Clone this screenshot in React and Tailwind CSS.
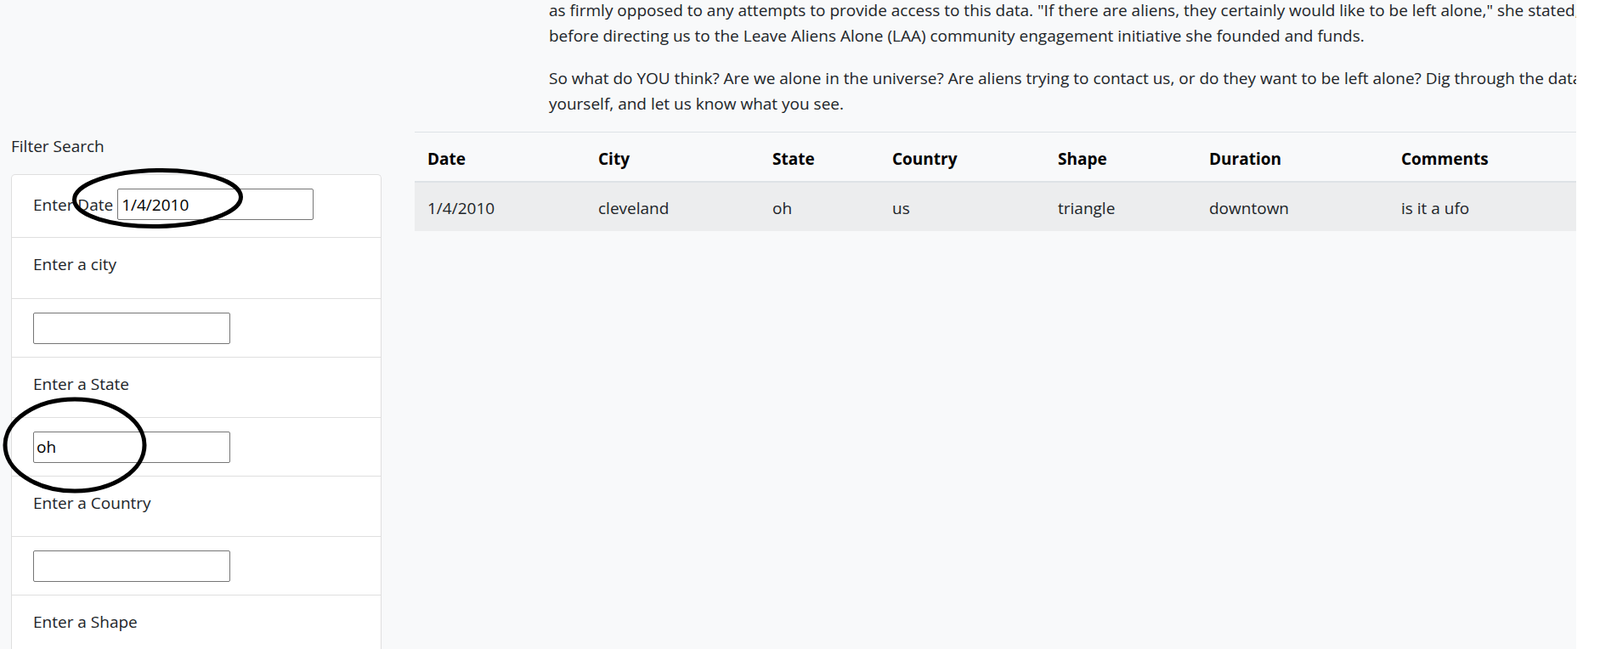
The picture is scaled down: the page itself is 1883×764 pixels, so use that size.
import React from "react";

const cols = [
  { name: "Date", w: "w-[201px]", v: "1/4/2010" },
  { name: "City", w: "w-[205px]", v: "cleveland" },
  { name: "State", w: "w-[141px]", v: "oh" },
  { name: "Country", w: "w-[195px]", v: "us" },
  { name: "Shape", w: "w-[178px]", v: "triangle" },
  { name: "Duration", w: "w-[226px]", v: "downtown" },
  { name: "Comments", w: "w-[240px]", v: "is it a ufo" },
];

function LabelRow({ text, h }) {
  return (
    <li className={`${h} border-b border-[#dfdfdf] pl-[25px] pt-[16px] leading-[30px]`}>
      {text}
    </li>
  );
}

function InputRow({ value }) {
  return (
    <li className="h-[69px] border-b border-[#dfdfdf] pl-[25px] flex items-center">
      <input
        type="text"
        defaultValue={value}
        className="w-[232px] h-[37px] border border-[#767676] rounded-[2px] bg-white px-[3px] text-[19px] text-black outline-none"
        style={{ fontFamily: "inherit" }}
      />
    </li>
  );
}

export default function App() {
  return (
    <div
      className="relative w-[1883px] h-[764px] bg-white overflow-hidden text-[#212529] text-[19px]"
      style={{ fontFamily: '"Open Sans", "Noto Sans", sans-serif' }}
    >
      <div className="w-[1855px] h-[764px] bg-[#f8f9fa] overflow-hidden flex">
        {/* Left filter column */}
        <div className="w-[488px] shrink-0 pl-[13px] pt-[157px]">
          <div className="leading-[30px] mb-[18px]">Filter Search</div>
          <ul className="w-[436px] bg-white border-t border-l border-r border-[#dfdfdf] rounded-t-[5px]">
            <li className="h-[74px] border-b border-[#dfdfdf] pl-[25px] pt-[16px] flex items-baseline">
              <label className="leading-[30px] mr-[5px]">Enter Date</label>
              <input
                type="text"
                defaultValue="1/4/2010"
                className="w-[231px] h-[37px] border border-[#767676] rounded-[2px] bg-white px-[4px] text-[19px] text-black outline-none"
                style={{ fontFamily: "inherit" }}
              />
            </li>
            <LabelRow text="Enter a city" h="h-[72px]" />
            <InputRow value="" />
            <LabelRow text="Enter a State" h="h-[71px]" />
            <InputRow value="oh" />
            <LabelRow text="Enter a Country" h="h-[71px]" />
            <InputRow value="" />
            <LabelRow text="Enter a Shape" h="h-[71px]" />
            <InputRow value="" />
          </ul>
        </div>

        {/* Right content column */}
        <div className="flex-1 min-w-0">
          <div className="mt-[-3px] pl-[158px] whitespace-nowrap leading-[30px]">
            <p className="mb-[20px]">
              as firmly opposed to any attempts to provide access to this data. "If there are aliens, they certainly would like to be left alone," she stated,
              <br />
              before directing us to the Leave Aliens Alone (LAA) community engagement initiative she founded and funds.
            </p>
            <p className="mb-[18px]">
              So what do YOU think? Are we alone in the universe? Are aliens trying to contact us, or do they want to be left alone? Dig through the data
              <br />
              yourself, and let us know what you see.
            </p>
          </div>
          <table className="table-fixed border-collapse w-[1386px] text-left">
            <thead>
              <tr className="border-t border-[#dee2e6] border-b-2">
                {cols.map((c) => (
                  <th
                    key={c.name}
                    className={`${c.w} h-[57px] px-[15px] pt-[16px] pb-[11px] align-top leading-[30px] font-bold text-black`}
                  >
                    {c.name}
                  </th>
                ))}
              </tr>
            </thead>
            <tbody>
              <tr className="bg-[#ecedee] border-t-2 border-[#dee2e6]">
                {cols.map((c) => (
                  <td key={c.name} className="h-[57px] px-[15px] pt-[15px] pb-[12px] align-top leading-[30px]">
                    {c.v}
                  </td>
                ))}
              </tr>
            </tbody>
          </table>
        </div>
      </div>

      {/* Hand-drawn annotation circles */}
      <svg className="absolute left-0 top-0 pointer-events-none" width="1883" height="764">
        <ellipse cx="185.5" cy="233.5" rx="98" ry="33" fill="none" stroke="#000" strokeWidth="5" transform="rotate(-1 185.5 233.5)" />
        <ellipse cx="88" cy="524" rx="82" ry="54" fill="none" stroke="#000" strokeWidth="5" />
      </svg>
    </div>
  );
}
